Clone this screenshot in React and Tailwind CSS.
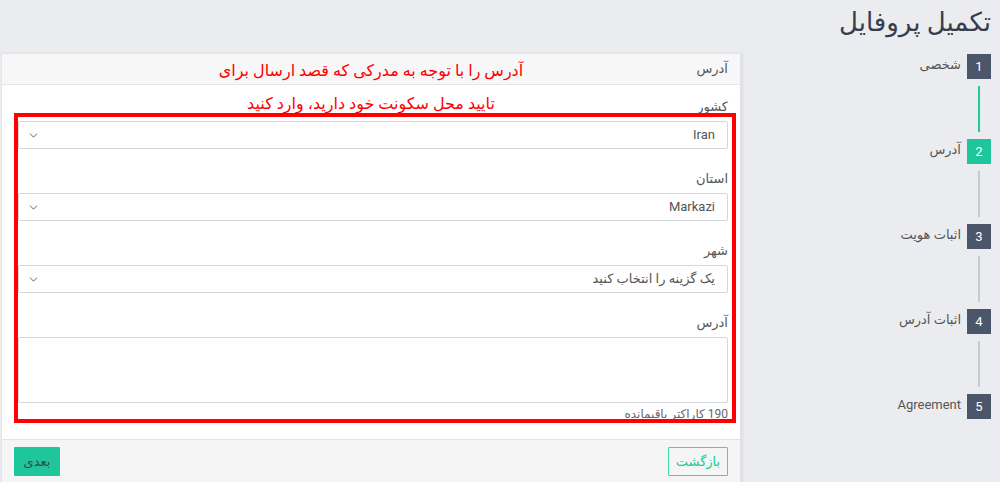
import React from 'react';
import { ChevronDown } from 'lucide-react';

const font = { fontFamily: 'Roboto, "DejaVu Sans", sans-serif' };

function SelectField({ label, value }) {
    return (
        <div className="mb-5">
            <div className="text-[13px] text-[#555] leading-5 mb-1">{label}</div>
            <div className="h-[28px] border border-[#d4d6dc] rounded-[2px] bg-white flex items-center justify-between pr-3 pl-2">
                <span className="text-[13px] text-[#555]">{value}</span>
                <ChevronDown size={13} strokeWidth={1.8} className="text-[#5b6170]" />
            </div>
        </div>
    );
}

export default function App() {
    const steps = [
        { n: 1, label: 'شخصی', active: false },
        { n: 2, label: 'آدرس', active: true },
        { n: 3, label: 'اثبات هویت', active: false },
        { n: 4, label: 'اثبات آدرس', active: false },
        { n: 5, label: 'Agreement', active: false }
    ];

    return (
        <div dir="ltr" className="w-[1000px] h-[482px] bg-[#ebecf0] flex overflow-hidden" style={font}>
            {/* Form card */}
            <div className="w-[741px] pt-[53px] pl-[1px] shrink-0">
                <div dir="rtl" className="relative bg-white border border-[#e3e4e8] shadow-[2px_0_3px_rgba(0,0,0,0.06)] h-[440px]">
                    <div className="h-[31px] bg-[#f7f7f7] border-b border-[#e6e6e6] flex items-center pr-3 text-[13px] text-[#555]">
                        آدرس
                    </div>
                    <div className="pr-3 pl-4 pt-[12px] pb-2">
                        <SelectField label="کشور" value="Iran" />
                        <SelectField label="استان" value="Markazi" />
                        <SelectField label="شهر" value="یک گزینه را انتخاب کنید" />
                        <div className="text-[13px] text-[#555] leading-5 mb-1">آدرس</div>
                        <div className="h-[66px] border border-[#d4d6dc] rounded-[2px] bg-white"></div>
                        <div className="text-[12px] text-[#666] mt-[3px] leading-4">190 کاراکتر باقیمانده</div>
                    </div>
                    <div className="absolute left-0 right-0 top-[385px] bottom-0 bg-[#f5f5f5] border-t border-[#e3e3e3] flex items-start justify-between pr-3 pl-3 pt-[7px]">
                        <button className="h-[29px] w-[60px] border border-[#3fd6ae] text-[#20c997] text-[13px] bg-transparent rounded-[1px]">بازگشت</button>
                        <button className="h-[29px] w-[46px] bg-[#1fc69c] text-[#2f4f48] text-[13px] rounded-[1px]">بعدی</button>
                    </div>

                    {/* annotation overlay */}
                    <div className="absolute left-0 right-0 top-[0px] text-center text-[#ff0000] text-[16px] leading-[33px]">
                        <div>آدرس را با توجه به مدرکی که قصد ارسال برای</div>
                        <div>تایید محل سکونت خود دارید، وارد کنید</div>
                    </div>
                    <div className="absolute left-[12px] top-[59px] w-[722px] h-[310px] border-[4px] border-[#ff0000]"></div>
                </div>
            </div>

            {/* Steps sidebar */}
            <div dir="rtl" className="flex-1 pr-[9px] pt-[4px]">
                <h1 className="text-[26px] text-[#383c4c] leading-[36px] font-normal mb-[14px]">تکمیل پروفایل</h1>
                <div className="flex flex-col">
                    {steps.map((s, i) => (
                        <div key={s.n} className="flex flex-col">
                            <div className="flex items-start gap-[6px]">
                                <div className={`w-[24px] h-[25px] flex items-center justify-center text-white text-[13px] ${s.active ? 'bg-[#1fc69c]' : 'bg-[#4b566b]'}`}>
                                    {s.n}
                                </div>
                                <span className="text-[13px] text-[#555] leading-[18px] pt-[2px]">{s.label}</span>
                            </div>
                            {i < steps.length - 1 && (
                                <div className="w-[24px] flex justify-center py-[7px]">
                                    <div className={`w-[2px] h-[46px] ${i === 0 ? 'bg-[#20c997]' : 'bg-[#c8cacf]'}`}></div>
                                </div>
                            )}
                        </div>
                    ))}
                </div>
            </div>
        </div>
    );
}
